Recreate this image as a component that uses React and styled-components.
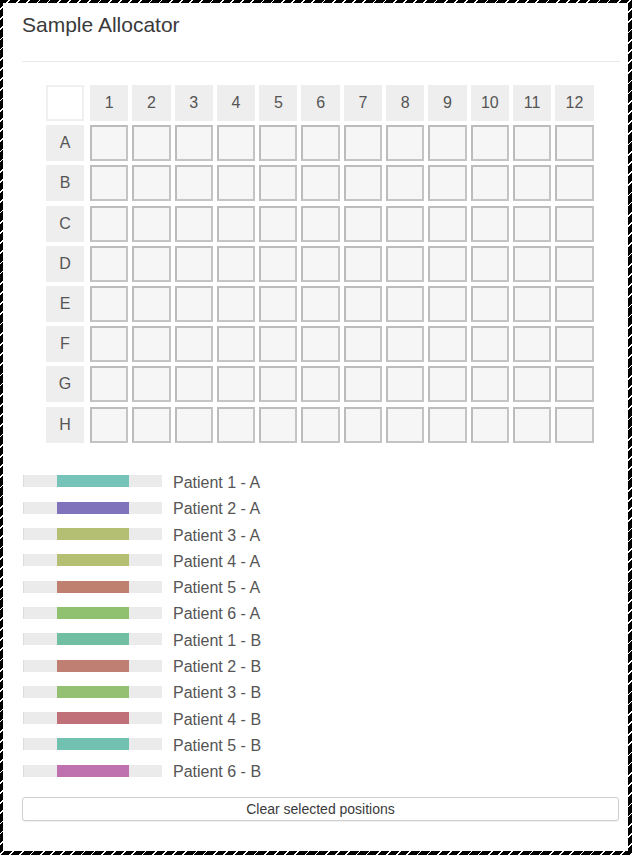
import React from "react";
import styled, { createGlobalStyle } from "styled-components";

const GlobalStyle = createGlobalStyle`
  html, body {
    margin: 0;
    padding: 0;
    background: #fff;
  }
  * {
    box-sizing: border-box;
  }
`;

const Frame = styled.div`
  width: 632px;
  height: 855px;
  padding: 3px 4px 4px 3px;
  background: repeating-linear-gradient(
    135deg,
    #000 0 6px,
    #fff 6px 7.2px
  );
`;

const Panel = styled.div`
  height: 100%;
  background: #fff;
  padding: 10px 8px 0 19px;
  font-family: "Liberation Sans", Arial, sans-serif;
`;

const Title = styled.h3`
  margin: 0;
  font-size: 21px;
  line-height: 24px;
  font-weight: normal;
  color: #3a3a3a;
`;

const Rule = styled.hr`
  margin: 24px 0 0;
  border: 0;
  border-top: 1px solid #e8e8e8;
  width: 598px;
`;

const Plate = styled.div`
  display: grid;
  grid-template-columns: 40px repeat(12, 38.3px);
  grid-auto-rows: 36px;
  column-gap: 4px;
  row-gap: 4.2px;
  width: 548px;
  margin: 23px 0 0 24px;
`;

const Corner = styled.div`
  background: #fff;
  border: 2px solid #efefef;
  width: 38px;
`;

const Head = styled.div`
  display: flex;
  align-items: center;
  justify-content: center;
  background: #eeeeee;
  color: #555;
  font-size: 16px;
  width: ${(p) => (p.$row ? "38px" : "auto")};
`;

const Well = styled.div`
  background: #f6f6f6;
  border: 2px solid #bcbcbc;
  border-right-color: #c4c4c4;
  border-bottom-color: #c4c4c4;
`;

const Legend = styled.div`
  margin-top: 25.8px;
  display: flex;
  flex-direction: column;
`;

const LegendRow = styled.div`
  display: flex;
  align-items: center;
  height: 26.3px;
  padding-left: 1px;
`;

const Track = styled.div`
  position: relative;
  width: 139px;
  height: 12px;
  background: #ebebeb;
  border-left: 1px solid #dcdcdc;
  margin-right: 11px;
`;

const Fill = styled.div`
  position: absolute;
  left: 33px;
  top: 0;
  width: 72px;
  height: 12px;
  background: ${(p) => p.$color};
`;

const Label = styled.span`
  font-size: 16px;
  line-height: 18px;
  padding-top: 3px;
  color: #555;
`;

const ClearButton = styled.button`
  display: block;
  width: 597px;
  height: 24px;
  margin-top: 13.5px;
  padding: 0;
  background: #fff;
  border: 1px solid #cfcfcf;
  border-radius: 3px;
  box-shadow: 0 1px 1px rgba(0, 0, 0, 0.06);
  font-family: "Liberation Sans", Arial, sans-serif;
  font-size: 14px;
  color: #3a3a3a;
`;

const rows = ["A", "B", "C", "D", "E", "F", "G", "H"];
const cols = Array.from({ length: 12 }, (_, i) => i + 1);

const patients = [
  ["Patient 1 - A", "#76c3b9"],
  ["Patient 2 - A", "#8073bb"],
  ["Patient 3 - A", "#b5bf73"],
  ["Patient 4 - A", "#b5bf73"],
  ["Patient 5 - A", "#bf806f"],
  ["Patient 6 - A", "#8fc170"],
  ["Patient 1 - B", "#70bfa2"],
  ["Patient 2 - B", "#bf7f72"],
  ["Patient 3 - B", "#93c073"],
  ["Patient 4 - B", "#bf7079"],
  ["Patient 5 - B", "#72c0b0"],
  ["Patient 6 - B", "#bf70af"],
];

export default function App() {
  return (
    <>
      <GlobalStyle />
      <Frame>
        <Panel>
          <Title>Sample Allocator</Title>
          <Rule />
          <Plate>
            <Corner />
            {cols.map((c) => (
              <Head key={c}>{c}</Head>
            ))}
            {rows.map((r) => (
              <React.Fragment key={r}>
                <Head $row>{r}</Head>
                {cols.map((c) => (
                  <Well key={r + c} />
                ))}
              </React.Fragment>
            ))}
          </Plate>
          <Legend>
            {patients.map(([name, color]) => (
              <LegendRow key={name}>
                <Track>
                  <Fill $color={color} />
                </Track>
                <Label>{name}</Label>
              </LegendRow>
            ))}
          </Legend>
          <ClearButton>Clear selected positions</ClearButton>
        </Panel>
      </Frame>
    </>
  );
}
